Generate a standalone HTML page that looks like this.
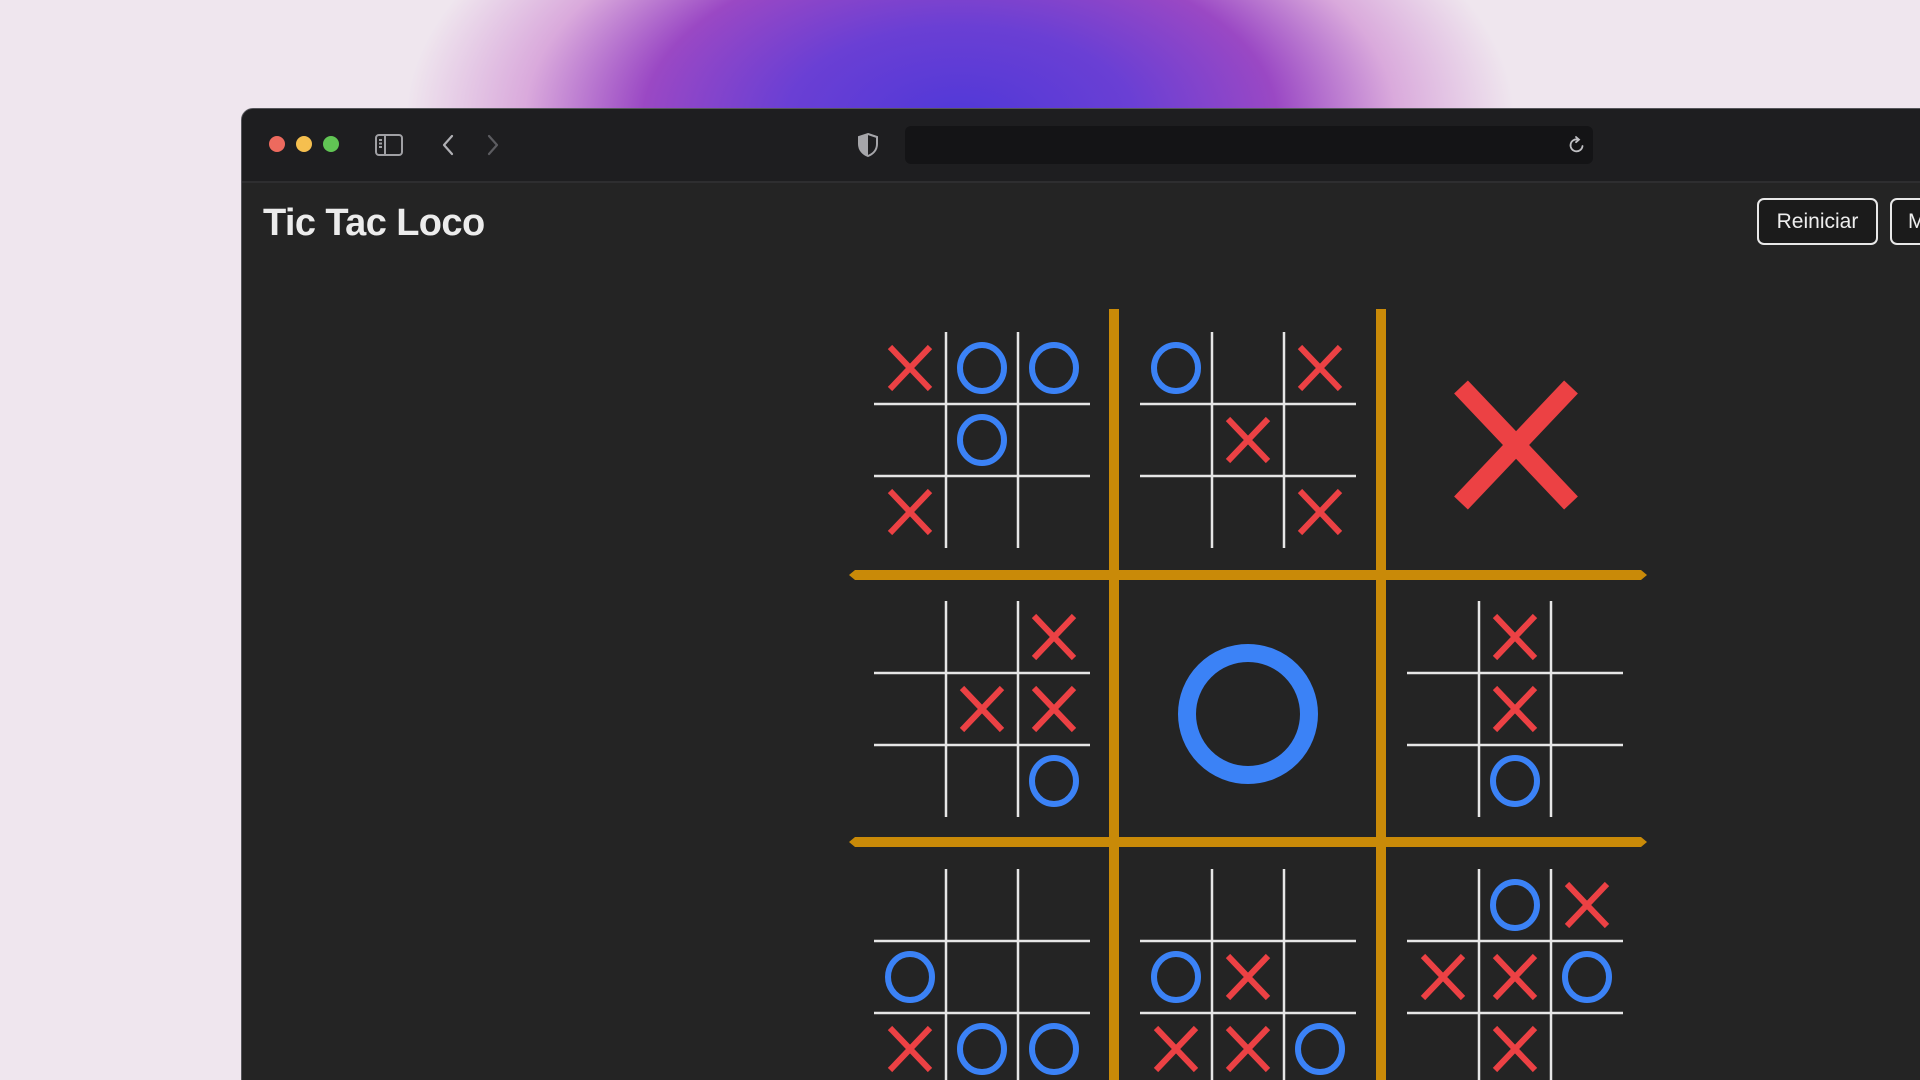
<!DOCTYPE html>
<html><head><meta charset="utf-8"><style>
html,body{margin:0;padding:0;width:1920px;height:1080px;overflow:hidden;}
body{background:#efe6ee;position:relative;font-family:"Liberation Sans",sans-serif;}
.glow{position:absolute;left:400px;top:-180px;width:1120px;height:600px;border-radius:50%;
background:radial-gradient(ellipse at 50% 50%, #5038d8 0%, #6a3fd4 22%, #9a48c4 40%, rgba(200,120,205,0.55) 55%, rgba(239,230,238,0) 70%);}
.win{position:absolute;left:241px;top:108px;width:1700px;height:1000px;background:#242424;border-radius:12px;border:1px solid #55555a;overflow:hidden;}
.bar{position:absolute;left:0;top:0;right:0;height:72px;background:#1e1e20;border-bottom:2px solid #2e2e30;}
.dot{position:absolute;top:27px;width:16px;height:16px;border-radius:50%;}
.url{position:absolute;left:663px;top:17px;width:688px;height:38px;background:#141416;border-radius:6px;}
.title{position:absolute;left:21px;top:93px;font-size:38px;font-weight:bold;color:#ececec;letter-spacing:-0.6px;}
.btn{position:absolute;top:89px;height:43px;border:2px solid #e8e8e8;border-radius:7px;background:#1b1b1b;color:#eee;font-size:21px;line-height:43px;text-align:center;}
</style></head><body>
<div class="glow"></div>
<div class="win">
 <div class="bar">
  <div class="dot" style="left:27px;background:#ed6a5e"></div>
  <div class="dot" style="left:54px;background:#f5bf4f"></div>
  <div class="dot" style="left:81px;background:#61c554"></div>
  <svg style="position:absolute;left:132px;top:23px" width="30" height="26" viewBox="0 0 30 26" fill="none" stroke="#a0a0a4" stroke-width="2"><rect x="2" y="3" width="26" height="20" rx="3"/><line x1="11" y1="3" x2="11" y2="23"/><line x1="5" y1="8" x2="8" y2="8"/><line x1="5" y1="11.5" x2="8" y2="11.5"/><line x1="5" y1="15" x2="8" y2="15"/></svg>
  <svg style="position:absolute;left:198px;top:24px" width="16" height="24" viewBox="0 0 16 24" fill="none" stroke="#b0b0b4" stroke-width="2.2" stroke-linecap="round" stroke-linejoin="round"><path d="M12 3 L4 12 L12 21"/></svg>
  <svg style="position:absolute;left:243px;top:24px" width="16" height="24" viewBox="0 0 16 24" fill="none" stroke="#5c5c60" stroke-width="2.2" stroke-linecap="round" stroke-linejoin="round"><path d="M4 3 L12 12 L4 21"/></svg>
  <svg style="position:absolute;left:615px;top:23px" width="22" height="26" viewBox="0 0 22 26"><path d="M11 2 L20 5 V12 C20 18 16 22 11 24 C6 22 2 18 2 12 V5 Z" fill="none" stroke="#a6a6aa" stroke-width="2"/><path d="M11 2 L2 5 V12 C2 18 6 22 11 24 Z" fill="#a6a6aa"/></svg>
  <div class="url"></div>
  <svg style="position:absolute;left:1326px;top:26px" width="18" height="20" viewBox="0 0 18 20" fill="none" stroke="#c0c0c4" stroke-width="1.8" stroke-linecap="round"><path d="M14.5 11 A6 6 0 1 1 10 4.5"/><path d="M8 2 L11 4.6 L8 7.2"/></svg>
 </div>
 <div class="title">Tic Tac Loco</div>
 <div class="btn" style="left:1515px;width:117px">Reiniciar</div>
 <div class="btn" style="left:1648px;width:80px;text-align:left;padding-left:16px">M</div>
</div>
<svg style="position:absolute;left:0;top:0" width="1920" height="1080" viewBox="0 0 1920 1080">
<defs>
 <g id="x"><path d="M-20,-21 L20,21 M20,-21 L-20,21" stroke="#ec4144" stroke-width="6"/></g>
 <g id="o"><ellipse cx="0" cy="0" rx="22" ry="23" fill="none" stroke="#3b82f6" stroke-width="6"/></g>
 <g id="g" stroke="#e6e6e6" stroke-width="2.5"><line x1="-36" y1="-108" x2="-36" y2="108"/><line x1="36" y1="-108" x2="36" y2="108"/><line x1="-108" y1="-36" x2="108" y2="-36"/><line x1="-108" y1="36" x2="108" y2="36"/></g>
</defs>
<rect x="1109" y="309" width="10" height="780" fill="#c98a08"/>
<rect x="1376" y="309" width="10" height="780" fill="#c98a08"/>
<polygon points="849,575 855,570 1641,570 1647,575 1641,580 855,580" fill="#c98a08"/>
<polygon points="849,842 855,837 1641,837 1647,842 1641,847 855,847" fill="#c98a08"/>
<use href="#g" x="982" y="440"/><use href="#g" x="1248" y="440"/>
<use href="#g" x="982" y="709"/><use href="#g" x="1515" y="709"/>
<use href="#g" x="982" y="977"/><use href="#g" x="1248" y="977"/><use href="#g" x="1515" y="977"/>
<use href="#x" x="910" y="368"/><use href="#o" x="982" y="368"/><use href="#o" x="1054" y="368"/><use href="#o" x="982" y="440"/><use href="#x" x="910" y="512"/>
<use href="#o" x="1176" y="368"/><use href="#x" x="1320" y="368"/><use href="#x" x="1248" y="440"/><use href="#x" x="1320" y="512"/>
<path d="M1461,387 L1571,503 M1571,387 L1461,503" stroke="#ec4144" stroke-width="19"/>
<use href="#x" x="1054" y="637"/><use href="#x" x="982" y="709"/><use href="#x" x="1054" y="709"/><use href="#o" x="1054" y="781"/>
<ellipse cx="1248" cy="714" rx="61" ry="61" fill="none" stroke="#3b82f6" stroke-width="18"/>
<use href="#x" x="1515" y="637"/><use href="#x" x="1515" y="709"/><use href="#o" x="1515" y="781"/>
<use href="#o" x="910" y="977"/><use href="#x" x="910" y="1049"/><use href="#o" x="982" y="1049"/><use href="#o" x="1054" y="1049"/>
<use href="#o" x="1176" y="977"/><use href="#x" x="1248" y="977"/><use href="#x" x="1176" y="1049"/><use href="#x" x="1248" y="1049"/><use href="#o" x="1320" y="1049"/>
<use href="#o" x="1515" y="905"/><use href="#x" x="1587" y="905"/><use href="#x" x="1443" y="977"/><use href="#x" x="1515" y="977"/><use href="#o" x="1587" y="977"/><use href="#x" x="1515" y="1049"/>
</svg>
</body></html>
